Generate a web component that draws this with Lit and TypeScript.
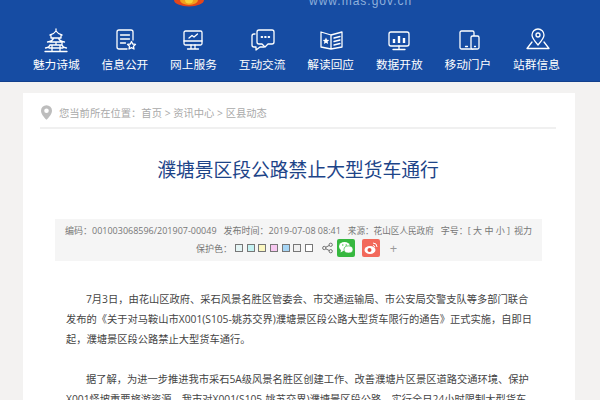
import { LitElement, html, css, svg } from "lit";
import { customElement } from "lit/decorators.js";

const ICONS = [
  svg`<path d="M16 2v2M10 8c3-.6 4.600-2 6-4 1.400 2 3 3.400 6 4M11 8v3h10V8M7.500 15c3.500-.5 5.500-2 6-4h5c.5 2 2.500 3.500 6 4M10 15h12v3H10M5.500 21c2.500-.4 4-1.300 4.500-3M26.500 21c-2.500-.4-4-1.300-4.500-3M12 18v6M20 18v6M16 15v3M5 24.500h22M9 21h14"/>`,
  svg`<path d="M18 22H10a2 2 0 0 1-2-2V5a2 2 0 0 1 2-2h12a2 2 0 0 1 2 2v8M11.500 8h9M11.500 12h9M11.500 16h5"/><path d="M22.500 14.500l1.200 2.500 2.800.4-2 1.900.5 2.700-2.500-1.300-2.500 1.300.5-2.700-2-1.900 2.800-.4z"/>`,
  svg`<rect x="7" y="4" width="18" height="14" rx="1.500"/><path d="M7 14h18M14 18v4M18 18v4M10.500 22h11M12 11l3-2.500 2 1.500 3.500-3"/>`,
  svg`<path d="M13 3h13a2 2 0 0 1 2 2v10a2 2 0 0 1-2 2h-4l-3 3-3-3h-3a2 2 0 0 1-2-2V5a2 2 0 0 1 2-2z"/><path d="M9 7H8a2 2 0 0 0-2 2v9a2 2 0 0 0 2 2h2v3l4-3h4"/><path d="M15.500 10h.8M19 10h.8M22.500 10h.8" stroke-width="1.800"/>`,
  svg`<path d="M6 5l10 3v14L6 20zM16 8l11-3v15l-11 2M19 11l6-1.500M19 14.500l6-1.500M19 18l6-1.500"/><path d="M11 10.500l1 2.200 2.300.3-1.700 1.600.5 2.300-2.100-1.200-2.100 1.200.5-2.300L7.700 13l2.300-.3z" fill="#fff" stroke="none"/>`,
  svg`<rect x="6" y="5" width="20" height="14" rx="2"/><path d="M16 19v3M10 22.500h12"/><path d="M11 12v4M16 9v7M21 11v5" stroke-width="2.400" stroke-linecap="butt"/>`,
  svg`<rect x="8" y="4" width="14" height="18" rx="1.500"/><rect x="19" y="9" width="8" height="13" rx="1.500" fill="#164ca3"/><path d="M13.500 19.500h2M22.500 19.500h1"/>`,
  svg`<path d="M18 18c-3.500-4-6-7-6-10a6 6 0 0 1 12 0c0 3-2.500 6-6 10z"/><circle cx="18" cy="8" r="2"/><path d="M12 15l-5 6.500h22L24 15"/>`,
];
const NAV = ["魅力诗城", "信息公开", "网上服务", "互动交流", "解读回应", "数据开放", "移动门户", "站群信息"];
const SWATCHES = ["#e4f5f5", "#c5f3f3", "#fbf7c0", "#f7c8f0", "#a6d5f5", "#f0f0f0", "#ffffff"];

@customElement("app-root")
export class AppRoot extends LitElement {
  static styles = css`
    :host { display: block; width: 600px; height: 400px; overflow: hidden; background: #f3f2f1;
      font-family: "Open Sans", "Noto Sans CJK SC", sans-serif; }
    .head { height: 81px; background: #164ca3; border-bottom: 1px solid #123f8c; position: relative; }
    .emblem { position: absolute; left: 174px; top: 0; width: 30px; height: 7px; }
    .url { position: absolute; left: 309px; top: -6px; font: 12px/14px "Liberation Sans", sans-serif; letter-spacing: 1px; color: #8fb0dc; white-space: nowrap; }
    .nav { display: flex; padding: 27px 0 0 22px; }
    .item { width: 68.600px; display: flex; flex-direction: column; align-items: center; color: #fff; font-size: 11.700px; line-height: 14px; gap: 2px; white-space: nowrap; }
    .item svg { width: 32px; height: 28px; fill: none; stroke: #fff; stroke-width: 1.300; stroke-linejoin: round; stroke-linecap: round; }
    .card { margin: 11px 25px 0 23px; background: #fff; height: 320px; padding: 0 19px 0 17px; }
    .crumb { height: 30px; padding: 4px 0 0 1px; display: flex; align-items: center; gap: 7px; border-bottom: 2px solid #f0f0f0; color: #a9a9a9; font-size: 10.300px; }
    .crumb svg { width: 11px; height: 15px; fill: #bdbdbd; flex: none; }
    h1 { margin: 29px 0 0; text-align: center; font-size: 18.800px; line-height: 24px; font-weight: 400; color: #1d4488; }
    .meta { margin: 37px 0 0 15px; width: 487px; height: 42px; padding-top: 3px; box-sizing: border-box; background: #f5f5f5; color: #777; font-size: 9px; }
    .row1 { height: 17px; padding-left: 10px; display: flex; align-items: center; white-space: nowrap; gap: 7px; }
    .src { font-size: 8.600px; }
    .size { margin-right: -3px; }
    .row2 { display: flex; align-items: center; padding-left: 141px; height: 18px; }
    .label { margin-right: 3px; white-space: nowrap; }
    .sw { width: 6px; height: 6px; border: 1px solid #777; margin-right: 3.700px; flex: none; }
    .share { width: 11px; height: 12px; fill: none; stroke: #666; stroke-width: 1; margin: 0 4px 0 5px; flex: none; }
    .badge { width: 18px; height: 18px; border-radius: 2px; margin-right: 7px; flex: none; }
    .wx { background: #36b83f; }
    .wb { background: #f2695b; }
    .badge svg { width: 18px; height: 18px; display: block; }
    .plus { color: #999; font-size: 13px; margin-left: 3px; line-height: 17px; }
    .body { margin: 29px 0 0 26px; width: 469px; font-size: 10.250px; line-height: 19.900px; color: #444; }
    .body p { margin: 0 0 19.900px; text-indent: 20px; }
  `;

  render() {
    return html`
      <div class="head">
        <svg class="emblem" viewBox="0 0 30 7"><ellipse cx="15" cy="0" rx="15" ry="6.500" fill="#e2461b"/><ellipse cx="15" cy="0" rx="9" ry="5" fill="#f2a01c"/><ellipse cx="15" cy="0" rx="4" ry="3.500" fill="#f7d23a"/></svg>
        <div class="url">www.mas.gov.cn</div>
        <div class="nav">
          ${NAV.map((t, i) => html`<div class="item"><svg viewBox="0 0 32 28">${ICONS[i]}</svg><span>${t}</span></div>`)}
        </div>
      </div>
      <div class="card">
        <div class="crumb">
          <svg viewBox="0 0 12 16"><path fill-rule="evenodd" d="M6 0a6 6 0 0 1 6 6c0 3.500-3.500 7.500-6 10C3.500 13.500 0 9.500 0 6a6 6 0 0 1 6-6zm0 3.500a2.500 2.500 0 1 0 0 5 2.500 2.500 0 0 0 0-5z"/></svg>
          <span>您当前所在位置：首页 > 资讯中心 > 区县动态</span>
        </div>
        <h1>濮塘景区段公路禁止大型货车通行</h1>
        <div class="meta">
          <div class="row1">
            <span>编码：001003068596/201907-00049</span>
            <span>发布时间：2019-07-08 08:41</span>
            <span class="src">来源：花山区人民政府</span>
            <span class="size">字号：[ 大 中 小 ]</span>
            <span>视力</span>
          </div>
          <div class="row2">
            <span class="label">保护色：</span>
            ${SWATCHES.map((c) => html`<span class="sw" style="background:${c}"></span>`)}
            <svg class="share" viewBox="0 0 12 12"><circle cx="9.500" cy="2.500" r="1.800"/><circle cx="2.500" cy="6" r="1.800"/><circle cx="9.500" cy="9.500" r="1.800"/><path d="M4 5.200l4-2M4 6.800l4 2"/></svg>
            <span class="badge wx"><svg viewBox="0 0 18 18"><ellipse cx="7.500" cy="7.500" rx="5.500" ry="4.500" fill="#fff"/><path d="M4 11l-.5 2.500L7 11.500z" fill="#fff"/><ellipse cx="11.500" cy="10.500" rx="4.500" ry="3.600" fill="#fff" stroke="#36b83f" stroke-width=".7"/><circle cx="5.800" cy="6" r=".7" fill="#36b83f"/><circle cx="9.200" cy="6" r=".7" fill="#36b83f"/></svg></span>
            <span class="badge wb"><svg viewBox="0 0 18 18"><ellipse cx="8" cy="11" rx="5.500" ry="4" fill="#fff"/><circle cx="7.500" cy="11" r="2" fill="#e25040"/><path d="M11 4a4 4 0 0 1 4 4M11 6.500A1.600 1.600 0 0 1 12.600 8" stroke="#fff" fill="none"/></svg></span>
            <span class="plus">+</span>
          </div>
        </div>
        <div class="body">
          <p>7月3日，由花山区政府、采石风景名胜区管委会、市交通运输局、市公安局交警支队等多部门联合发布的《关于对马鞍山市X001(S105-姚苏交界)濮塘景区段公路大型货车限行的通告》正式实施，自即日起，濮塘景区段公路禁止大型货车通行。</p>
          <p>据了解，为进一步推进我市采石5A级风景名胜区创建工作、改善濮塘片区景区道路交通环境、保护X001怪坡重要旅游资源，我市对X001(S105-姚苏交界)濮塘景区段公路，实行全日24小时限制大型货车通行。</p>
        </div>
      </div>
    `;
  }
}
